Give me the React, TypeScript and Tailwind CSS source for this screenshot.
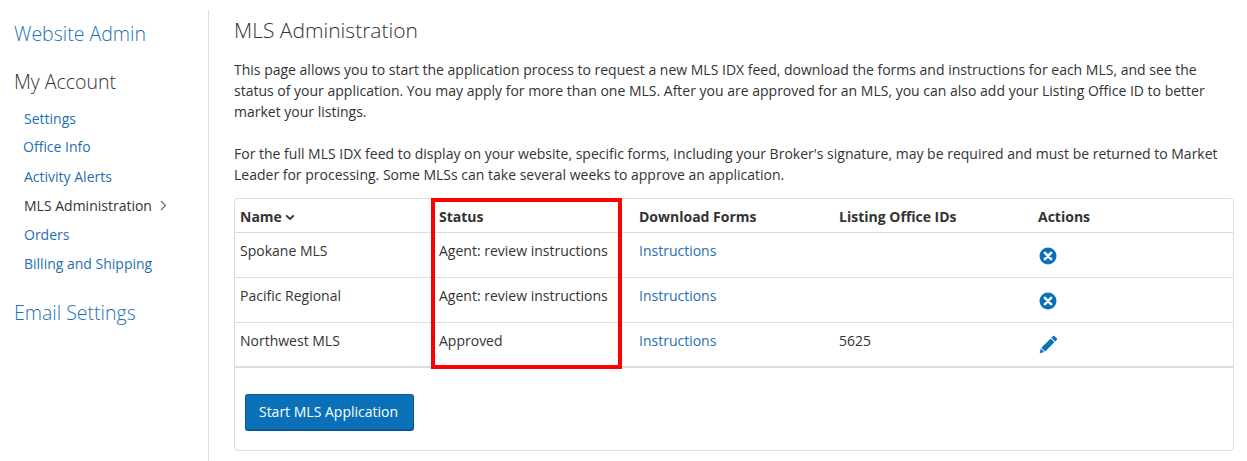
import React from "react";

const link = "text-[#1f6fb2]";

function XIcon() {
  return (
    <svg width="18" height="18" viewBox="0 0 18 18" className="block">
      <circle cx="9" cy="9" r="8.5" fill="#0a70b8" />
      <path d="M5.9 5.900l6.200 6.200M12.100 5.900l-6.200 6.200" stroke="#fff" strokeWidth="2.600" strokeLinecap="round" />
    </svg>
  );
}

function PencilIcon() {
  return (
    <svg width="19" height="19" viewBox="0 0 19 19" className="block">
      <path d="M14 1.200c.5-.5 1.200-.5 1.700 0l2 2c.5.5.5 1.200 0 1.700l-1.600 1.600-3.700-3.700z" fill="#0a70b8" />
      <path d="M11.700 3.500l3.700 3.700-9.300 9.300-3.700-3.700z" fill="#0a70b8" />
      <path d="M1.800 13.500l3.500 3.500-4.600 1.200z" fill="#0a70b8" />
    </svg>
  );
}

const rows = [
  { name: "Spokane MLS", status: "Agent: review instructions", id: "", icon: <XIcon />, pt: "pt-[14px]" },
  { name: "Pacific Regional", status: "Agent: review instructions", id: "", icon: <XIcon />, pt: "pt-[14px]" },
  { name: "Northwest MLS", status: "Approved", id: "5625", icon: <PencilIcon />, pt: "pt-[12px]" },
];

const nav = [
  { label: "Settings", cls: "pl-[10px] h-[28px] " + link },
  { label: "Office Info", cls: "pl-[9px] h-[28px] mb-[2px] " + link },
  { label: "Activity Alerts", cls: "pl-[10px] h-[29px] " + link },
  { label: "MLS Administration", cls: "pl-[10px] h-[29px] text-[#333]", active: true },
  { label: "Orders", cls: "pl-[10px] h-[29px] " + link },
  { label: "Billing and Shipping", cls: "pl-[10px] h-[29px] " + link },
];

export default function App() {
  return (
    <div className="flex h-[461px] w-[1247px] overflow-hidden bg-white text-[14px] text-[#333] font-['Open_Sans',sans-serif]">
      <aside className="mt-[10px] w-[209px] shrink-0 border-r border-[#ddd] pl-[14px]">
        <div className="mt-[9px] text-[19.5px] leading-[30px] font-light text-[#1f6fb2]">Website Admin</div>
        <div className="mt-[18px] text-[19.5px] leading-[30px] font-light text-[#333]">My Account</div>
        <nav className="mt-[7px] flex flex-col">
          {nav.map((n) => (
            <div key={n.label} className={"flex items-center gap-[8px] " + n.cls}>
              {n.label}
              {n.active && (
                <svg width="7" height="11" viewBox="0 0 7 11" className="block">
                  <path d="M1 1l4.500 4.500-4.500 4.500" fill="none" stroke="#666" strokeWidth="1.100" />
                </svg>
              )}
            </div>
          ))}
        </nav>
        <div className="mt-[20px] text-[19.5px] leading-[30px] font-light text-[#1f6fb2]">Email Settings</div>
      </aside>

      <main className="ml-[25px] w-[1000px] shrink-0">
        <h1 className="mt-[15px] text-[21px] leading-[30px] font-light text-[#333]">MLS Administration</h1>
        <p className="mt-[14px] w-[999px] leading-[21px]">
          This page allows you to start the application process to request a new MLS IDX feed, download the forms and instructions for each MLS, and see the status of your application. You may apply for more than one MLS. After you are approved for an MLS, you can also add your Listing Office ID to better market your listings.
        </p>
        <p className="mt-[21px] w-[999px] leading-[21px]">
          For the full MLS IDX feed to display on your website, specific forms, including your Broker's signature, may be required and must be returned to Market Leader for processing. Some MLSs can take several weeks to approve an application.
        </p>

        <div className="relative mt-[13px] h-[253px] rounded-[4px] border border-[#ddd]">
          <table className="w-full table-fixed border-collapse">
            <thead>
              <tr className="h-[33px] border-b border-[#ddd]">
                <th className="w-[199px] pt-[2px] pl-[5px] text-left font-bold">
                  <span className="flex items-center gap-[3px]">
                    Name
                    <svg width="10" height="7" viewBox="0 0 10 7" className="mt-[2px] block">
                      <path d="M1.200 1.300l3.800 3.700 3.800-3.700" fill="none" stroke="#333" strokeWidth="1.800" />
                    </svg>
                  </span>
                </th>
                <th className="w-[200px] pt-[2px] pl-[5px] text-left font-bold">Status</th>
                <th className="w-[200px] pt-[2px] pl-[5px] text-left font-bold">Download Forms</th>
                <th className="w-[199px] pt-[2px] pl-[5px] text-left font-bold">Listing Office IDs</th>
                <th className="pt-[2px] pl-[5px] text-left font-bold">Actions</th>
              </tr>
            </thead>
            <tbody>
              {rows.map((r, i) => (
                <tr key={r.name} className={"h-[45px] align-top " + (i === 2 ? "border-b-2 border-[#ddd]" : "border-b border-[#ddd]")}>
                  <td className="pt-[7px] pl-[5px] leading-[21px]">{r.name}</td>
                  <td className="pt-[7px] pl-[5px] leading-[21px]">{r.status}</td>
                  <td className={"pt-[7px] pl-[5px] leading-[21px] " + link}>Instructions</td>
                  <td className="pt-[7px] pl-[5px] leading-[21px]">{r.id}</td>
                  <td className={r.pt + " pl-[6px]"}>{r.icon}</td>
                </tr>
              ))}
            </tbody>
          </table>
          <button className="mt-[26px] ml-[10px] h-[37px] w-[169px] rounded-[3px] border border-[#0a5a96] border-b-2 bg-[#0a70b8] pr-[2px] pb-[2px] text-[14px] text-white">
            Start MLS Application
          </button>
          <div className="absolute left-[196px] top-[-1px] h-[171px] w-[191px] border-[4px] border-[#f00]" />
        </div>
      </main>
    </div>
  );
}
